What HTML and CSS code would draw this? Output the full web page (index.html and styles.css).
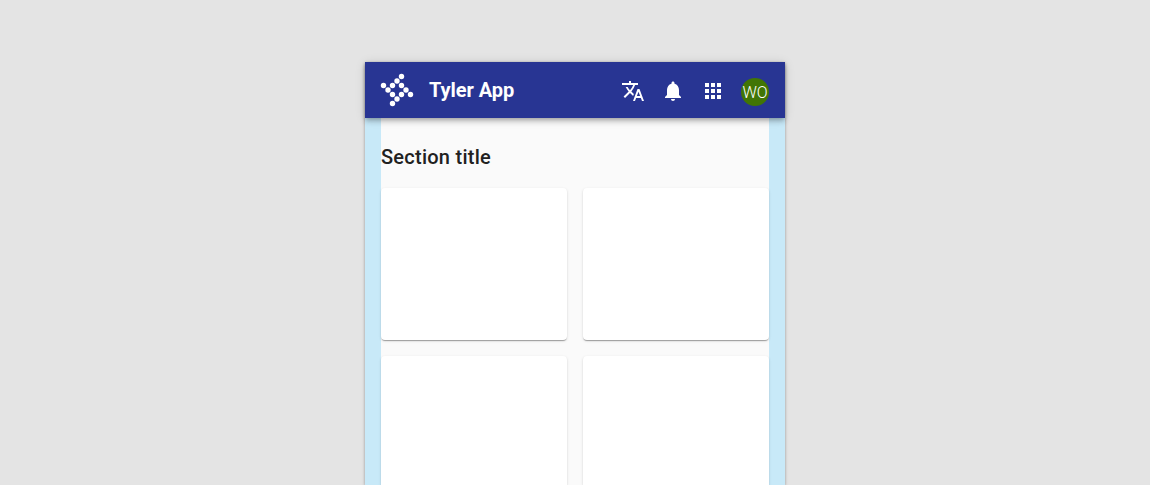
FILE: index.html
```html
<!DOCTYPE html>
<html lang="en">
<head>
<meta charset="utf-8">
<title>Tyler App</title>
<link rel="stylesheet" href="styles.css">
</head>
<body>
<div class="device">
  <header class="app-bar">
    <svg class="logo" viewBox="0 0 32 32" aria-hidden="true">
      <circle cx="20.5" cy="2.5" r="2.7"/>
      <circle cx="16" cy="7" r="2.7"/>
      <circle cx="2.5" cy="11.5" r="2.7"/>
      <circle cx="11.5" cy="11.5" r="2.7"/>
      <circle cx="20.5" cy="11.5" r="2.7"/>
      <circle cx="7" cy="16" r="2.7"/>
      <circle cx="25" cy="16" r="2.7"/>
      <circle cx="11.5" cy="20.5" r="2.7"/>
      <circle cx="20.5" cy="20.5" r="2.7"/>
      <circle cx="29.5" cy="20.5" r="2.7"/>
      <circle cx="16" cy="25" r="2.7"/>
      <circle cx="11.5" cy="29.5" r="2.7"/>
    </svg>
    <h1 class="app-title">Tyler App</h1>
    <div class="actions">
      <svg class="icon" viewBox="0 0 24 24"><path d="M12.87 15.07l-2.54-2.51.03-.03A17.52 17.52 0 0 0 14.07 6H17V4h-7V2H8v2H1v1.99h11.17C11.5 7.92 10.44 9.75 9 11.35 8.07 10.32 7.3 9.19 6.69 8h-2c.73 1.63 1.73 3.17 2.98 4.56l-5.09 5.02L4 19l5-5 3.11 3.11.76-2.04zM18.5 10h-2L12 22h2l1.12-3h4.75L21 22h2l-4.5-12zm-2.62 7l1.62-4.33L19.12 17h-3.24z"/></svg>
      <svg class="icon" viewBox="0 0 24 24"><path d="M12 22c1.1 0 2-.9 2-2h-4c0 1.1.89 2 2 2zm6-6v-5c0-3.07-1.64-5.64-4.5-6.32V4c0-.83-.67-1.5-1.5-1.5s-1.5.67-1.5 1.5v.68C7.63 5.36 6 7.92 6 11v5l-2 2v1h16v-1l-2-2z"/></svg>
      <svg class="icon" viewBox="0 0 24 24"><path d="M4 8h4V4H4v4zm6 12h4v-4h-4v4zm-6 0h4v-4H4v4zm0-6h4v-4H4v4zm6 0h4v-4h-4v4zm6-10v4h4V4h-4zm-6 4h4V4h-4v4zm6 6h4v-4h-4v4zm0 6h4v-4h-4v4z"/></svg>
      <span class="avatar">WO</span>
    </div>
  </header>
  <main class="content">
    <h2 class="section-title">Section title</h2>
    <div class="cards">
      <div class="card"></div>
      <div class="card"></div>
      <div class="card card-cut"></div>
      <div class="card card-cut"></div>
    </div>
  </main>
</div>
</body>
</html>
```
FILE: styles.css
```css
* { box-sizing: border-box; }

body {
  margin: 0;
  height: 485px;
  padding-top: 62px;
  overflow: hidden;
  background: #e4e4e4;
  font-family: Roboto, sans-serif;
}

.device {
  width: 420px;
  height: 423px;
  margin: 0 auto;
  background: #c8e9f8;
  box-shadow: 0 1px 3px rgba(0, 0, 0, .35);
}

.app-bar {
  position: relative;
  display: flex;
  align-items: center;
  height: 56px;
  padding: 0 16px;
  background: #283593;
  color: #fff;
  box-shadow: 0 2px 4px -1px rgba(0, 0, 0, .2), 0 4px 5px rgba(0, 0, 0, .14), 0 1px 10px rgba(0, 0, 0, .12);
}

.logo {
  width: 32px;
  height: 32px;
  fill: #fff;
  overflow: visible;
}

.app-title {
  margin: 0 0 0 16px;
  font-size: 20px;
  font-weight: 700;
  line-height: 24px;
  letter-spacing: -.05px;
}

.actions {
  display: flex;
  align-items: center;
  gap: 16px;
  margin-left: auto;
  padding-top: 2px;
}

.icon {
  width: 24px;
  height: 24px;
  fill: #fff;
}

.avatar {
  width: 28px;
  height: 28px;
  border-radius: 50%;
  background: #417505;
  font-size: 16px;
  font-weight: 300;
  line-height: 30px;
  text-align: center;
  margin-top: 2px;
}

.content {
  height: 367px;
  margin: 0 16px;
  padding-top: 27px;
  background: #fafafa;
}

.section-title {
  margin: 0 0 19px;
  color: #212121;
  font-size: 20px;
  font-weight: 500;
  line-height: 24px;
  letter-spacing: .25px;
}

.cards {
  display: grid;
  grid-template-columns: 1fr 1fr;
  grid-template-rows: 152px 129px;
  gap: 16px;
}

.card {
  border-radius: 4px;
  background: #fff;
  box-shadow: 0 2px 1px -1px rgba(0, 0, 0, .2), 0 1px 1px rgba(0, 0, 0, .14), 0 1px 3px rgba(0, 0, 0, .12);
}

.card-cut {
  border-radius: 4px 4px 0 0;
}
```
